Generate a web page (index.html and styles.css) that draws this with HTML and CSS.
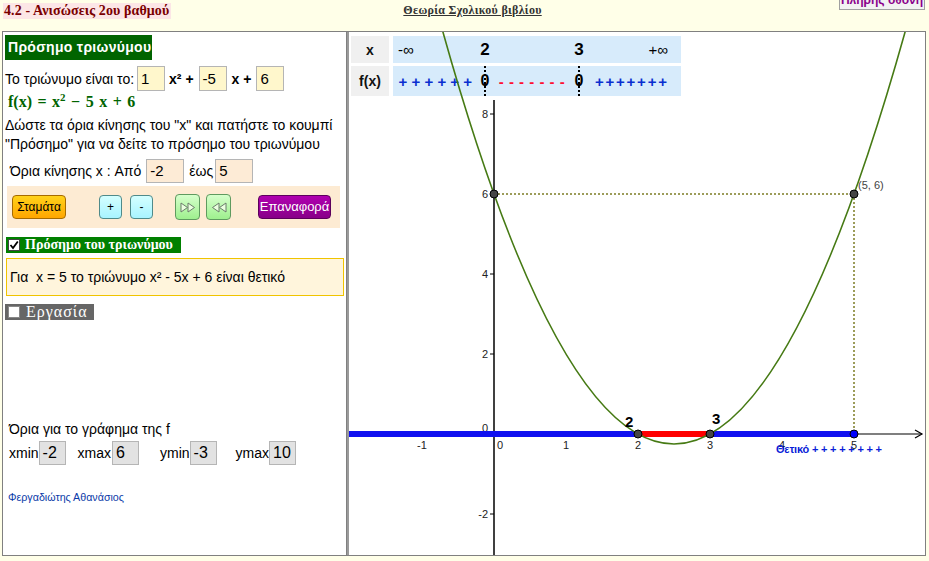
FILE: index.html
```html
<!DOCTYPE html>
<html lang="el">
<head>
<meta charset="utf-8">
<title>Ανισώσεις 2ου βαθμού</title>
<link rel="stylesheet" href="styles.css">
</head>
<body>
<header class="top">
  <div class="title">4.2 - Ανισώσεις 2ου βαθμού</div>
  <a class="theory">Θεωρία Σχολικού βιβλίου</a>
  <button class="full">Πλήρης οθόνη</button>
</header>
<main class="frame">
  <section class="left">
    <div class="panel-title">Πρόσημο τριωνύμου</div>
    <div class="row r1">
      <span>Το τριώνυμο είναι το:</span>
      <span class="inp yel a">1</span>
      <b class="op a1">x² +</b>
      <span class="inp yel b">-5</span>
      <b class="op b1">x +</b>
      <span class="inp yel c">6</span>
    </div>
    <div class="formula">f(x) = x<sup>2</sup> − 5 x + 6</div>
    <p class="desc">Δώστε τα όρια κίνησης του "x" και πατήστε το κουμπί<br>"Πρόσημο" για να δείτε το πρόσημο του τριωνύμου</p>
    <div class="row r2">
      <span>Όρια κίνησης x : Από</span>
      <span class="inp peach p1">-2</span>
      <span class="eos">έως</span>
      <span class="inp peach p2">5</span>
    </div>
    <div class="controls">
      <button class="btn stop">Σταμάτα</button>
      <button class="btn cyan bplus">+</button>
      <button class="btn cyan bminus">-</button>
      <button class="btn green fwd"><svg width="16" height="11" viewBox="0 0 16 11"><polygon points="1,1 7.5,5.5 1,10" fill="#eaffdf" stroke="#6b7b6b"/><polygon points="8,1 14.5,5.5 8,10" fill="#eaffdf" stroke="#6b7b6b"/></svg></button>
      <button class="btn green back"><svg width="16" height="11" viewBox="0 0 16 11"><polygon points="8,1 1.5,5.5 8,10" fill="#eaffdf" stroke="#6b7b6b"/><polygon points="15,1 8.5,5.5 15,10" fill="#eaffdf" stroke="#6b7b6b"/></svg></button>
      <button class="btn purple reset">Επαναφορά</button>
    </div>
    <div class="chk-head">
      <span class="box"><svg width="10" height="10" viewBox="0 0 10 10"><path d="M1.5 5 L4 8 L8.8 1.5" fill="none" stroke="#000" stroke-width="1.8"/></svg></span>
      <span class="chk-text">Πρόσημο του τριωνύμου</span>
    </div>
    <div class="info">Για&nbsp; x = 5 το τριώνυμο x² - 5x + 6 είναι θετικό</div>
    <div class="task">
      <span class="box empty"></span>
      <span class="task-text">Εργασία</span>
    </div>
    <div class="lim-title">Όρια για το γράφημα της f</div>
    <div class="row limits">
      <span>xmin</span><span class="inp gray g1">-2</span>
      <span class="l2">xmax</span><span class="inp gray g2">6</span>
      <span class="l3">ymin</span><span class="inp gray g3">-3</span>
      <span class="l4">ymax</span><span class="inp gray g4">10</span>
    </div>
    <div class="author">Φεργαδιώτης Αθανάσιος</div>
  </section>

  <section class="graph">
    <div class="sign-table">
      <div class="lab">x</div>
      <div class="vals">
        <span class="inf-l">-∞</span>
        <span class="root">2</span>
        <span></span>
        <span class="root">3</span>
        <span class="inf-r">+∞</span>
      </div>
      <div class="lab">f(x)</div>
      <div class="vals">
        <span class="pos pl">+ + + + + +</span>
        <span class="zero">0</span>
        <span class="neg">- - - - - - -</span>
        <span class="zero">0</span>
        <span class="pos pr">+ + + + + + +</span>
      </div>
    </div>
    <svg class="plot" width="576" height="523" viewBox="349 32 576 523">
      <line x1="494" y1="100" x2="494" y2="555" stroke="#000" stroke-width="1.5"/>
      <g stroke="#000" stroke-width="1">
        <line x1="490" y1="114" x2="494" y2="114"/>
        <line x1="490" y1="194" x2="494" y2="194"/>
        <line x1="490" y1="274" x2="494" y2="274"/>
        <line x1="490" y1="354" x2="494" y2="354"/>
        <line x1="490" y1="514" x2="494" y2="514"/>
      </g>
      <g font-family="Liberation Sans, Arial, sans-serif" font-size="11" fill="#222" text-anchor="end">
        <text x="488" y="118">8</text>
        <text x="488" y="198">6</text>
        <text x="488" y="278">4</text>
        <text x="488" y="358">2</text>
        <text x="488" y="432">0</text>
        <text x="488" y="518">-2</text>
      </g>
      <line x1="349" y1="434" x2="922" y2="434" stroke="#000" stroke-width="1.2"/>
      <polyline points="915,430 922,434 915,438" fill="none" stroke="#000" stroke-width="1.2"/>
      <g font-family="Liberation Sans, Arial, sans-serif" font-size="11" fill="#222" text-anchor="middle">
        <text x="422" y="449">-1</text>
        <text x="500" y="449">0</text>
        <text x="566" y="449">1</text>
        <text x="638" y="449">2</text>
        <text x="710" y="449">3</text>
        <text x="782" y="449">4</text>
        <text x="854" y="449">5</text>
      </g>
      <line x1="349" y1="434" x2="854" y2="434" stroke="#1010f0" stroke-width="6"/>
      <line x1="638" y1="434" x2="710" y2="434" stroke="#ff0000" stroke-width="6"/>
      <g stroke="#9c9c5a" stroke-width="2" stroke-dasharray="2 2">
        <line x1="498" y1="194" x2="850" y2="194"/>
        <line x1="854" y1="198" x2="854" y2="431"/>
      </g>
      <path d="M440 21.5 Q674 866.5 908 21.5" fill="none" stroke="#467a14" stroke-width="1.6"/>
      <g stroke="#000" stroke-width="1">
        <circle cx="494" cy="194" r="4" fill="#454545"/>
        <circle cx="854" cy="194" r="4" fill="#454545"/>
        <circle cx="638" cy="434" r="4" fill="#454545"/>
        <circle cx="710" cy="434" r="4" fill="#454545"/>
        <circle cx="854" cy="434" r="4" fill="#0000ff"/>
      </g>
      <text x="858" y="189" font-family="Liberation Sans, Arial, sans-serif" font-size="11" fill="#444">(5, 6)</text>
      <g font-family="Liberation Sans, Arial, sans-serif" font-weight="bold" font-size="15" fill="#000">
        <text x="625" y="427">2</text>
        <text x="712" y="424">3</text>
      </g>
      <text x="776" y="453" textLength="106" lengthAdjust="spacing" font-family="Liberation Sans, Arial, sans-serif" font-weight="bold" font-size="11" fill="#0a1ed8">Θετικό + + + + + + + +</text>
    </svg>
  </section>
</main>
</body>
</html>
```

FILE: styles.css
```css
* { box-sizing: border-box; }

body {
  margin: 0;
  background: #ffffe8;
  font-family: "Liberation Sans", Arial, sans-serif;
  font-size: 14px;
  color: #000;
  overflow: hidden;
}

/* ---------- header ---------- */
.top {
  display: flex;
  align-items: flex-start;
  height: 31px;
}
.title {
  margin: 3px 0 0 3px;
  padding: 0 2px 0 1px;
  background: #fce6e6;
  color: #7a0000;
  font: bold 14px/16px "Liberation Serif", serif;
  letter-spacing: 0.1px;
}
.theory {
  margin: 3px 0 0 232px;
  font: bold 12px/14px "Liberation Serif", serif;
  color: #333;
  text-decoration: underline;
  letter-spacing: 0.3px;
}
.full {
  margin: -10px 4px 0 auto;
  width: 86px;
  height: 20px;
  padding: 0;
  background: #f2f2f2;
  border: 1px solid #a0a0a0;
  color: #8b008b;
  font: bold 12px/14px "Liberation Sans", sans-serif;
}

/* ---------- frame ---------- */
.frame {
  display: flex;
  margin-left: 2px;
  width: 924px;
  height: 525px;
  border: 1px solid #808080;
  background: #fff;
}
.left {
  width: 344px;
  flex: none;
  border-right: 1px solid #808080;
}
.graph {
  flex: 1;
  display: grid;
  border-left: 2px solid #9a9a9a;
  overflow: hidden;
}

/* ---------- left panel ---------- */
.panel-title {
  margin: 3px 0 0 2px;
  width: 147px;
  height: 25px;
  padding-left: 3px;
  background: #006400;
  color: #fff;
  font: bold 14px/25px "Liberation Sans", sans-serif;
  letter-spacing: 0.3px;
  white-space: nowrap;
}
.row {
  display: flex;
  align-items: center;
  white-space: nowrap;
}
.inp {
  display: inline-block;
  height: 25px;
  padding-left: 3px;
  border: 1px solid #b5b5b5;
  font-size: 15px;
  line-height: 23px;
}
.yel { background: #fff7cc; }
.peach { background: #fdebd6; }
.gray { background: #e2e2e2; font-size: 16px; }

.r1 {
  margin-top: 6px;
  height: 25px;
  padding-left: 2px;
}
.r1 .a { margin-left: 3px; width: 28px; }
.r1 .b { margin-left: 5px; width: 28px; }
.r1 .c { margin-left: 5px; width: 28px; }
.op { font-size: 14px; margin-left: 4px; }
.b1 { margin-left: 5px; }

.formula {
  margin-top: 2px;
  height: 18px;
  padding-left: 5px;
  color: #006400;
  font: bold 16px/18px "Liberation Serif", serif;
  word-spacing: 1.5px;
}
.formula sup { font-size: 11px; line-height: 0; }

.desc {
  margin: 5px 0 0;
  padding-left: 2px;
  line-height: 19px;
  white-space: nowrap;
}

.r2 {
  margin-top: 5px;
  height: 24px;
  padding-left: 7px;
}
.r2 .inp { height: 24px; width: 38px; line-height: 22px; }
.p1 { margin-left: 5px; }
.eos { margin-left: 5px; }
.p2 { margin-left: 2px; }

.controls {
  display: flex;
  align-items: center;
  margin: 3px 0 0 4px;
  width: 333px;
  height: 42px;
  padding-left: 5px;
  background: #fdebd3;
}
.btn {
  height: 24px;
  padding: 0;
  border-radius: 4px;
  font: 12px/20px "Liberation Sans", sans-serif;
  color: #000;
  display: flex;
  align-items: center;
  justify-content: center;
}
.stop {
  width: 54px;
  background: linear-gradient(#ffd21a, #ffa600);
  border: 1px solid #a66b00;
}
.cyan {
  width: 23px;
  background: linear-gradient(#d4ffff, #a8f4ff);
  border: 1px solid #4f8a8a;
}
.bplus { margin-left: 33px; }
.bminus { margin-left: 8px; }
.green {
  width: 25px;
  height: 26px;
  background: linear-gradient(#d6ffcc, #9ef08e);
  border: 1px solid #5f9a5f;
}
.fwd { margin-left: 22px; }
.back { margin-left: 6px; }
.purple {
  width: 73px;
  margin-left: 27px;
  background: linear-gradient(#b000b0, #880088);
  border: 1px solid #5c005c;
  color: #fff;
  font-size: 13px;
}

.chk-head {
  display: flex;
  align-items: center;
  margin: 9px 0 0 3px;
  width: 175px;
  height: 16px;
  padding-left: 2px;
  background: #008000;
}
.box {
  display: flex;
  align-items: center;
  justify-content: center;
  width: 12px;
  height: 12px;
  background: #fff;
  border: 1px solid #444;
}
.chk-text {
  margin-left: 5px;
  color: #fff;
  font: bold 14px/16px "Liberation Serif", serif;
  white-space: nowrap;
}

.info {
  margin: 5px 0 0 3px;
  width: 338px;
  height: 38px;
  padding-left: 3px;
  background: #fff5dc;
  border: 1px solid #f0c400;
  line-height: 36px;
  white-space: nowrap;
}

.task {
  display: flex;
  align-items: center;
  margin: 8px 0 0 2px;
  width: 89px;
  height: 16px;
  padding-left: 3px;
  background: #666;
}
.box.empty { border-color: #888; }
.task-text {
  margin-left: 6px;
  color: #fff;
  font: 16px/16px "Liberation Serif", serif;
  letter-spacing: 1px;
}

.lim-title {
  margin-top: 101px;
  padding-left: 6px;
  line-height: 16px;
}
.limits {
  margin-top: 4px;
  height: 24px;
  padding-left: 6px;
}
.limits .inp { width: 27px; height: 24px; line-height: 22px; }
.g1 { margin-left: 0; }
.l2 { margin-left: 12px; }
.g2 { margin-left: 1px; }
.l3 { margin-left: 21px; }
.g3 { margin-left: 0; }
.l4 { margin-left: 19px; }
.g4 { margin-left: 0; }

.author {
  margin-top: 26px;
  padding-left: 5px;
  font-size: 10.7px;
  line-height: 12px;
  color: #0a3aa8;
}

/* ---------- graph ---------- */
.sign-table,
.plot {
  grid-area: 1 / 1;
}
.plot { display: block; }
.sign-table {
  align-self: start;
  justify-self: start;
  margin: 4px 0 0 2px;
  display: grid;
  grid-template-columns: 38px 288px;
  grid-template-rows: 27px 30px;
  gap: 3px 4px;
}
.lab {
  background: #f0f0f0;
  display: flex;
  align-items: center;
  justify-content: center;
  font-weight: bold;
  font-size: 14px;
  color: #111;
}
.vals {
  background: #d7ebfb;
  display: grid;
  grid-template-columns: 77px 20px 74px 20px 1fr;
  align-items: center;
  padding-left: 5px;
  height: 100%;
}
.inf-l { font-size: 15px; }
.inf-r { font-size: 15px; text-align: right; padding-right: 13px; }
.root {
  text-align: center;
  font-weight: bold;
  font-size: 17px;
}
.pos {
  color: #0a2fd0;
  font-weight: bold;
  font-size: 15px;
  white-space: nowrap;
}
.pl { text-align: right; padding-right: 3px; }
.pr { padding-left: 6px; letter-spacing: -1.2px; }
.zero {
  align-self: stretch;
  display: flex;
  align-items: center;
  justify-content: center;
  font-weight: bold;
  font-size: 16px;
  background: repeating-linear-gradient(#000 0 2px, transparent 2px 4px) center / 2px 100% no-repeat;
}
.neg {
  text-align: center;
  color: #ff1030;
  font-weight: bold;
  font-size: 15px;
  white-space: nowrap;
  letter-spacing: 0.5px;
}
```
